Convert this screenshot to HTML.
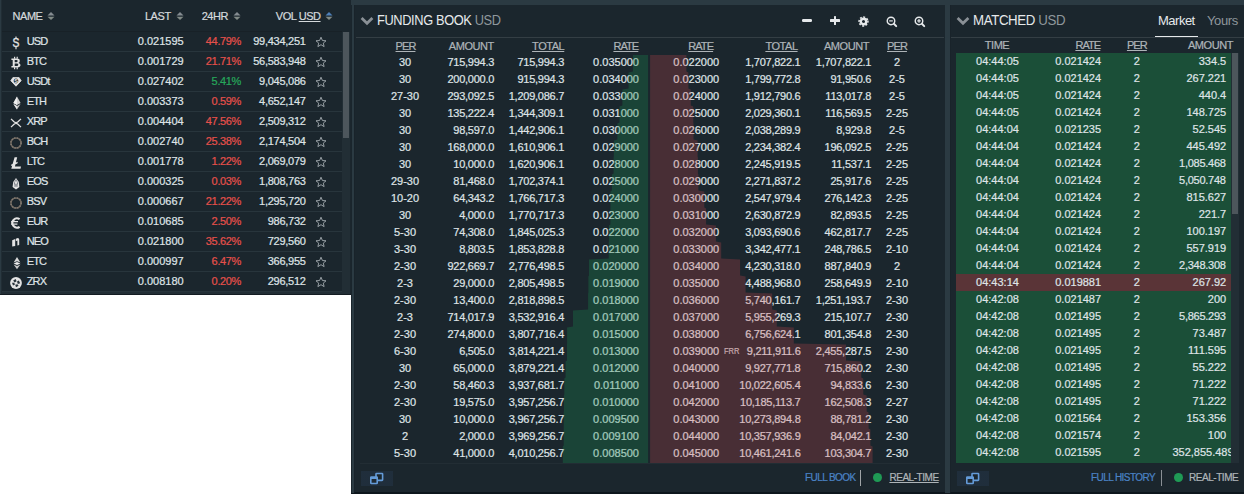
<!DOCTYPE html><html><head><meta charset="utf-8"><title>Funding</title><style>
*{box-sizing:border-box;margin:0;padding:0}
html,body{width:1244px;height:495px;overflow:hidden;background:#fff}
body{font-family:"Liberation Sans",sans-serif;font-size:11px;color:#dfe3e6;position:relative;line-height:1}
.abs{position:absolute}
.t{position:absolute;white-space:nowrap;line-height:12px;height:12px;-webkit-text-stroke:0.22px}
.r{text-align:right}
.c{text-align:center}
.hd{color:#aeb4b8;letter-spacing:-0.45px}
.nm{letter-spacing:-0.9px}
.cm{letter-spacing:-0.25px;margin-right:0.5px}
.pc{letter-spacing:-0.35px;margin-right:0.35px}
.hn{letter-spacing:-0.9px}
.u{text-decoration:underline}
.red{color:#e5504b}
.grn{color:#26a65b}
.title{position:absolute;font-size:14px;line-height:16px;white-space:nowrap;color:#e6e9eb;letter-spacing:-0.4px;transform-origin:0 50%;transform:scaleX(0.915)}
.title span{color:#8f979c}
</style></head><body>
<div class="abs" style="left:0;top:0;width:1244px;height:5px;background:#2b3a42"></div>
<div class="abs" style="left:351px;top:0;width:893px;height:494px;background:#2b3a42"></div>
<div class="abs" style="left:0;top:0;width:351px;height:295px;background:#1b262d"></div>
<div class="abs" style="left:354px;top:5px;width:591px;height:488px;background:#1b262d;border-bottom:1px solid #0d161c;border-left:1px solid #19232a"></div>
<div class="abs" style="left:950px;top:5px;width:294px;height:488px;background:#1b262d;border-bottom:1px solid #0d161c;border-left:1px solid #19232a"></div>
<div class="abs" style="left:351px;top:5px;width:1px;height:489px;background:#1a252c"></div>
<div class="abs" style="left:351px;top:493px;width:893px;height:1px;background:#0d161c"></div>
<div class="abs" style="left:945px;top:493px;width:5px;height:1px;background:#121a1f"></div>
<div class="abs" style="left:0;top:0;width:1px;height:295px;background:#2b3a42"></div><div class="abs" style="left:1px;top:0;width:1px;height:295px;background:#212d34"></div>
<div class="t hd" style="left:12.5px;top:10px;color:#d5d9dc">NAME</div>
<svg class="abs" style="left:46.5px;top:11px" width="8" height="10" viewBox="0 0 8 10"><path d="M0.5 4.5 L4 1.1 L7.5 4.5 Z" fill="#858c91"/><path d="M0.5 5.7 L4 9.1 L7.5 5.7 Z" fill="#818a86"/></svg>
<div class="t r hd" style="right:1073.3500000000001px;top:10px;color:#d5d9dc">LAST</div>
<svg class="abs" style="left:175.5px;top:11px" width="8" height="10" viewBox="0 0 8 10"><path d="M0.5 4.5 L4 1.1 L7.5 4.5 Z" fill="#858c91"/><path d="M0.5 5.7 L4 9.1 L7.5 5.7 Z" fill="#818a86"/></svg>
<div class="t r hd" style="right:1016.0500000000001px;top:10px;color:#d5d9dc">24HR</div>
<svg class="abs" style="left:232.5px;top:11px" width="8" height="10" viewBox="0 0 8 10"><path d="M0.5 4.5 L4 1.1 L7.5 4.5 Z" fill="#858c91"/><path d="M0.5 5.7 L4 9.1 L7.5 5.7 Z" fill="#818a86"/></svg>
<div class="t r hd" style="right:923.45px;top:10px;color:#d5d9dc">VOL <span class="u">USD</span></div>
<svg class="abs" style="left:324.5px;top:11px" width="8" height="10" viewBox="0 0 8 10"><path d="M0.5 4.5 L4 1.1 L7.5 4.5 Z" fill="#4f80ba"/><path d="M0.5 5.7 L4 9.1 L7.5 5.7 Z" fill="#818a86"/></svg>
<div class="abs" style="left:2px;top:31px;width:340px;height:20px;border-top:1px solid #182127"></div>
<div class="t nm" style="left:26.8px;top:35px">USD</div>
<div class="t r" style="right:1060.3px;top:35px">0.021595</div>
<div class="t r pc red" style="right:1002.6px;top:35px">44.79%</div>
<div class="t r cm" style="right:937.8px;top:35px">99,434,251</div>
<svg class="abs" style="left:315px;top:36px" width="12" height="12" viewBox="0 0 12 12"><path d="M6 1.2 L7.4 4.5 L11 4.8 L8.3 7.1 L9.1 10.6 L6 8.7 L2.9 10.6 L3.7 7.1 L1 4.8 L4.6 4.5 Z" fill="none" stroke="#a4abb0" stroke-width="0.9" stroke-linejoin="miter"/></svg>
<svg class="abs" style="left:8.8px;top:35.8px" width="14" height="14" viewBox="0 0 14 14"><text x="0" y="11.1" text-anchor="middle" font-family="Liberation Sans" font-size="12" fill="#e4e4e4" stroke="#e4e4e4" stroke-width="0.4" transform="translate(7 0) scale(0.86 1)">S</text><path d="M7 0.6 V3 M7 10.8 V13.2" stroke="#e4e4e4" stroke-width="1.1"/></svg>
<div class="abs" style="left:2px;top:51px;width:340px;height:20px;border-top:1px solid #28353c"></div>
<div class="t nm" style="left:26.8px;top:55px">BTC</div>
<div class="t r" style="right:1060.3px;top:55px">0.001729</div>
<div class="t r pc red" style="right:1002.6px;top:55px">21.71%</div>
<div class="t r cm" style="right:937.8px;top:55px">56,583,948</div>
<svg class="abs" style="left:315px;top:56px" width="12" height="12" viewBox="0 0 12 12"><path d="M6 1.2 L7.4 4.5 L11 4.8 L8.3 7.1 L9.1 10.6 L6 8.7 L2.9 10.6 L3.7 7.1 L1 4.8 L4.6 4.5 Z" fill="none" stroke="#a4abb0" stroke-width="0.9" stroke-linejoin="miter"/></svg>
<svg class="abs" style="left:9.1px;top:56.0px" width="14" height="14" viewBox="0 0 14 14"><path fill-rule="evenodd" fill="#e4e4e4" d="M2.4 2.6 H7.8 Q10.8 2.6 10.8 4.9 Q10.8 6.5 9.3 6.9 Q11.5 7.3 11.5 9.1 Q11.5 11.4 8.2 11.4 H2.4 V10.1 H3.7 V3.9 H2.4 Z M5.7 4 H7.5 Q8.7 4 8.7 5.1 Q8.7 6.2 7.5 6.2 H5.7 Z M5.7 7.6 H7.8 Q9.3 7.6 9.3 8.8 Q9.3 10 7.8 10 H5.7 Z"/><path d="M5.6 0.8 V2.8 M8.2 0.8 V2.8 M5.6 11.2 V13.3 M8.2 11.2 V13.3" stroke="#e4e4e4" stroke-width="1.2"/></svg>
<div class="abs" style="left:2px;top:71px;width:340px;height:20px;border-top:1px solid #28353c"></div>
<div class="t nm" style="left:26.8px;top:75px">USDt</div>
<div class="t r" style="right:1060.3px;top:75px">0.027402</div>
<div class="t r pc grn" style="right:1002.6px;top:75px">5.41%</div>
<div class="t r cm" style="right:937.8px;top:75px">9,045,086</div>
<svg class="abs" style="left:315px;top:76px" width="12" height="12" viewBox="0 0 12 12"><path d="M6 1.2 L7.4 4.5 L11 4.8 L8.3 7.1 L9.1 10.6 L6 8.7 L2.9 10.6 L3.7 7.1 L1 4.8 L4.6 4.5 Z" fill="none" stroke="#a4abb0" stroke-width="0.9" stroke-linejoin="miter"/></svg>
<svg class="abs" style="left:8.7px;top:75.2px" width="14" height="14" viewBox="0 0 14 14"><path d="M3.9 2.6 H10.1 L12.2 5.7 L7 11.2 L1.8 5.7 Z" fill="#e4e4e4" stroke="#e4e4e4" stroke-width="0.8" stroke-linejoin="round"/><circle cx="7" cy="6" r="2.4" fill="#2a343a"/><text x="7" y="8" text-anchor="middle" font-family="Liberation Sans" font-weight="bold" font-size="5.6" fill="#e4e4e4">S</text></svg>
<div class="abs" style="left:2px;top:91px;width:340px;height:20px;border-top:1px solid #28353c"></div>
<div class="t nm" style="left:26.8px;top:95px">ETH</div>
<div class="t r" style="right:1060.3px;top:95px">0.003373</div>
<div class="t r pc red" style="right:1002.6px;top:95px">0.59%</div>
<div class="t r cm" style="right:937.8px;top:95px">4,652,147</div>
<svg class="abs" style="left:315px;top:96px" width="12" height="12" viewBox="0 0 12 12"><path d="M6 1.2 L7.4 4.5 L11 4.8 L8.3 7.1 L9.1 10.6 L6 8.7 L2.9 10.6 L3.7 7.1 L1 4.8 L4.6 4.5 Z" fill="none" stroke="#a4abb0" stroke-width="0.9" stroke-linejoin="miter"/></svg>
<svg class="abs" style="left:9.5px;top:95.7px" width="14" height="14" viewBox="0 0 14 14"><path d="M7 0.6 L10.6 7 L7 9 L3.4 7 Z" fill="#d2d2d2"/><path d="M7 0.6 L7 9 L3.4 7 Z" fill="#efefef"/><path d="M7 13.4 L10.6 8.1 L7 10.1 L3.4 8.1 Z" fill="#c4c4c4"/><path d="M7 13.4 L7 10.1 L3.4 8.1 Z" fill="#e6e6e6"/></svg>
<div class="abs" style="left:2px;top:111px;width:340px;height:20px;border-top:1px solid #28353c"></div>
<div class="t nm" style="left:26.8px;top:115px">XRP</div>
<div class="t r" style="right:1060.3px;top:115px">0.004404</div>
<div class="t r pc red" style="right:1002.6px;top:115px">47.56%</div>
<div class="t r cm" style="right:937.8px;top:115px">2,509,312</div>
<svg class="abs" style="left:315px;top:116px" width="12" height="12" viewBox="0 0 12 12"><path d="M6 1.2 L7.4 4.5 L11 4.8 L8.3 7.1 L9.1 10.6 L6 8.7 L2.9 10.6 L3.7 7.1 L1 4.8 L4.6 4.5 Z" fill="none" stroke="#a4abb0" stroke-width="0.9" stroke-linejoin="miter"/></svg>
<svg class="abs" style="left:8.7px;top:116.0px" width="14" height="14" viewBox="0 0 14 14"><path d="M2 2.9 L5 5.8 Q7 7.3 9 5.8 L12 2.9 M2 11.1 L5 8.2 Q7 6.7 9 8.2 L12 11.1" fill="none" stroke="#e4e4e4" stroke-width="1.25"/></svg>
<div class="abs" style="left:2px;top:131px;width:340px;height:20px;border-top:1px solid #28353c"></div>
<div class="t nm" style="left:26.8px;top:135px">BCH</div>
<div class="t r" style="right:1060.3px;top:135px">0.002740</div>
<div class="t r pc red" style="right:1002.6px;top:135px">25.38%</div>
<div class="t r cm" style="right:937.8px;top:135px">2,174,504</div>
<svg class="abs" style="left:315px;top:136px" width="12" height="12" viewBox="0 0 12 12"><path d="M6 1.2 L7.4 4.5 L11 4.8 L8.3 7.1 L9.1 10.6 L6 8.7 L2.9 10.6 L3.7 7.1 L1 4.8 L4.6 4.5 Z" fill="none" stroke="#a4abb0" stroke-width="0.9" stroke-linejoin="miter"/></svg>
<svg class="abs" style="left:9px;top:135.7px" width="14" height="14" viewBox="0 0 14 14"><circle cx="7" cy="7" r="5.1" fill="none" stroke="#6d665f" stroke-width="1.5"/><circle cx="7" cy="7" r="5.1" fill="none" stroke="#857c72" stroke-width="1.5" stroke-dasharray="1.2 1.5"/></svg>
<div class="abs" style="left:2px;top:151px;width:340px;height:20px;border-top:1px solid #28353c"></div>
<div class="t nm" style="left:26.8px;top:155px">LTC</div>
<div class="t r" style="right:1060.3px;top:155px">0.001778</div>
<div class="t r pc red" style="right:1002.6px;top:155px">1.22%</div>
<div class="t r cm" style="right:937.8px;top:155px">2,069,079</div>
<svg class="abs" style="left:315px;top:156px" width="12" height="12" viewBox="0 0 12 12"><path d="M6 1.2 L7.4 4.5 L11 4.8 L8.3 7.1 L9.1 10.6 L6 8.7 L2.9 10.6 L3.7 7.1 L1 4.8 L4.6 4.5 Z" fill="none" stroke="#a4abb0" stroke-width="0.9" stroke-linejoin="miter"/></svg>
<svg class="abs" style="left:9.2px;top:156.1px" width="14" height="14" viewBox="0 0 14 14"><path d="M5.6 1.2 H8.2 L6.9 6.6 L8.8 5.8 L8.4 7.4 L6.5 8.2 L5.9 10.6 H12 L11.5 12.7 H2.3 L3.2 9.6 L1.9 10.1 L2.3 8.5 L3.6 8 Z" fill="#e4e4e4"/></svg>
<div class="abs" style="left:2px;top:171px;width:340px;height:20px;border-top:1px solid #28353c"></div>
<div class="t nm" style="left:26.8px;top:175px">EOS</div>
<div class="t r" style="right:1060.3px;top:175px">0.000325</div>
<div class="t r pc red" style="right:1002.6px;top:175px">0.03%</div>
<div class="t r cm" style="right:937.8px;top:175px">1,808,763</div>
<svg class="abs" style="left:315px;top:176px" width="12" height="12" viewBox="0 0 12 12"><path d="M6 1.2 L7.4 4.5 L11 4.8 L8.3 7.1 L9.1 10.6 L6 8.7 L2.9 10.6 L3.7 7.1 L1 4.8 L4.6 4.5 Z" fill="none" stroke="#a4abb0" stroke-width="0.9" stroke-linejoin="miter"/></svg>
<svg class="abs" style="left:9.1px;top:176.7px" width="14" height="14" viewBox="0 0 14 14"><path d="M7 1 L9.8 5 L10.4 10 L7 12.4 L3.6 10 L4.2 5 Z" fill="#e4e4e4"/><path d="M7 2.6 L5.3 5.8 L6 9.8 M7 2.6 L8.7 5.8 L8 9.8 M5.3 5.8 L8 9.8 M8.7 5.8 L6 9.8" stroke="#59626a" stroke-width="0.55" fill="none"/></svg>
<div class="abs" style="left:2px;top:191px;width:340px;height:20px;border-top:1px solid #28353c"></div>
<div class="t nm" style="left:26.8px;top:195px">BSV</div>
<div class="t r" style="right:1060.3px;top:195px">0.000667</div>
<div class="t r pc red" style="right:1002.6px;top:195px">21.22%</div>
<div class="t r cm" style="right:937.8px;top:195px">1,295,720</div>
<svg class="abs" style="left:315px;top:196px" width="12" height="12" viewBox="0 0 12 12"><path d="M6 1.2 L7.4 4.5 L11 4.8 L8.3 7.1 L9.1 10.6 L6 8.7 L2.9 10.6 L3.7 7.1 L1 4.8 L4.6 4.5 Z" fill="none" stroke="#a4abb0" stroke-width="0.9" stroke-linejoin="miter"/></svg>
<svg class="abs" style="left:9px;top:195.7px" width="14" height="14" viewBox="0 0 14 14"><circle cx="7" cy="7" r="5.1" fill="none" stroke="#6d665f" stroke-width="1.5"/><circle cx="7" cy="7" r="5.1" fill="none" stroke="#857c72" stroke-width="1.5" stroke-dasharray="1.2 1.5"/></svg>
<div class="abs" style="left:2px;top:211px;width:340px;height:20px;border-top:1px solid #28353c"></div>
<div class="t nm" style="left:26.8px;top:215px">EUR</div>
<div class="t r" style="right:1060.3px;top:215px">0.010685</div>
<div class="t r pc red" style="right:1002.6px;top:215px">2.50%</div>
<div class="t r cm" style="right:937.8px;top:215px">986,732</div>
<svg class="abs" style="left:315px;top:216px" width="12" height="12" viewBox="0 0 12 12"><path d="M6 1.2 L7.4 4.5 L11 4.8 L8.3 7.1 L9.1 10.6 L6 8.7 L2.9 10.6 L3.7 7.1 L1 4.8 L4.6 4.5 Z" fill="none" stroke="#a4abb0" stroke-width="0.9" stroke-linejoin="miter"/></svg>
<svg class="abs" style="left:9.2px;top:216.4px" width="14" height="14" viewBox="0 0 14 14"><path d="M10.6 3.2 A4.6 4.6 0 1 0 10.6 10.8" fill="none" stroke="#e4e4e4" stroke-width="2.1"/><path d="M2.2 5.7 H9 M2.2 8.2 H8.4" stroke="#e4e4e4" stroke-width="1.3"/></svg>
<div class="abs" style="left:2px;top:231px;width:340px;height:20px;border-top:1px solid #28353c"></div>
<div class="t nm" style="left:26.8px;top:235px">NEO</div>
<div class="t r" style="right:1060.3px;top:235px">0.021800</div>
<div class="t r pc red" style="right:1002.6px;top:235px">35.62%</div>
<div class="t r cm" style="right:937.8px;top:235px">729,560</div>
<svg class="abs" style="left:315px;top:236px" width="12" height="12" viewBox="0 0 12 12"><path d="M6 1.2 L7.4 4.5 L11 4.8 L8.3 7.1 L9.1 10.6 L6 8.7 L2.9 10.6 L3.7 7.1 L1 4.8 L4.6 4.5 Z" fill="none" stroke="#a4abb0" stroke-width="0.9" stroke-linejoin="miter"/></svg>
<svg class="abs" style="left:8.6px;top:235.2px" width="14" height="14" viewBox="0 0 14 14"><path d="M3.2 5.2 L6.2 4 V11 L3.2 11.6 Z" fill="#e4e4e4"/><path d="M6.8 3.7 L8.8 2.9 Q10.2 3 10.2 4.6 V10 L8.4 10.6 V5.6 L6.8 6.2 Z" fill="#e4e4e4"/></svg>
<div class="abs" style="left:2px;top:251px;width:340px;height:20px;border-top:1px solid #28353c"></div>
<div class="t nm" style="left:26.8px;top:255px">ETC</div>
<div class="t r" style="right:1060.3px;top:255px">0.000997</div>
<div class="t r pc red" style="right:1002.6px;top:255px">6.47%</div>
<div class="t r cm" style="right:937.8px;top:255px">366,955</div>
<svg class="abs" style="left:315px;top:256px" width="12" height="12" viewBox="0 0 12 12"><path d="M6 1.2 L7.4 4.5 L11 4.8 L8.3 7.1 L9.1 10.6 L6 8.7 L2.9 10.6 L3.7 7.1 L1 4.8 L4.6 4.5 Z" fill="none" stroke="#a4abb0" stroke-width="0.9" stroke-linejoin="miter"/></svg>
<svg class="abs" style="left:9.7px;top:256.4px" width="14" height="14" viewBox="0 0 14 14"><path d="M7 1 L10.4 6.6 L7 5.3 L3.6 6.6 Z" fill="#d8d8d8"/><path d="M3.6 7.4 L7 6.1 L10.4 7.4 L7 9 Z" fill="#ededed"/><path d="M7 13.2 L10.4 8.4 L7 10 L3.6 8.4 Z" fill="#c9c9c9"/></svg>
<div class="abs" style="left:2px;top:271px;width:340px;height:20px;border-top:1px solid #28353c"></div>
<div class="t nm" style="left:26.8px;top:275px">ZRX</div>
<div class="t r" style="right:1060.3px;top:275px">0.008180</div>
<div class="t r pc red" style="right:1002.6px;top:275px">0.20%</div>
<div class="t r cm" style="right:937.8px;top:275px">296,512</div>
<svg class="abs" style="left:315px;top:276px" width="12" height="12" viewBox="0 0 12 12"><path d="M6 1.2 L7.4 4.5 L11 4.8 L8.3 7.1 L9.1 10.6 L6 8.7 L2.9 10.6 L3.7 7.1 L1 4.8 L4.6 4.5 Z" fill="none" stroke="#a4abb0" stroke-width="0.9" stroke-linejoin="miter"/></svg>
<svg class="abs" style="left:9px;top:275.5px" width="14" height="14" viewBox="0 0 14 14"><circle cx="7" cy="7" r="5.9" fill="#e4e4e4"/><path d="M4.2 4.6 L6.6 3 L7.6 5.2 L5.6 6.6 Z M9.8 4.4 L11.2 7.2 L8.8 8 L8 5.6 Z M9.6 9.8 L7 11.2 L6.2 8.8 L8.4 8.2 Z M4 9.4 L3 6.8 L5.2 6.8 L6 8.6 Z" fill="#27323a"/></svg>
<div class="abs" style="left:2px;top:291px;width:340px;height:1px;background:#28353c"></div>
<div class="abs" style="left:342px;top:32px;width:8px;height:262px;background:#222e35"></div>
<div class="abs" style="left:2px;top:292px;width:348px;height:2px;background:#222e35"></div>
<div class="abs" style="left:0;top:294px;width:351px;height:1px;background:#141c22"></div>
<div class="abs" style="left:343px;top:32px;width:6px;height:106px;background:#4d565c"></div>
<svg class="abs" style="left:360.2px;top:15.7px" width="14" height="10" viewBox="0 0 14 10"><path d="M1.6 2 L7 7.2 L12.4 2" fill="none" stroke="#8a9096" stroke-width="2.8"/></svg>
<div class="title" style="left:377.2px;top:12px">FUNDING BOOK <span>USD</span></div>
<div class="abs" style="left:356px;top:37px;width:588px;height:1px;background:#343e44"></div>
<div class="t c hd hn u" style="left:385.5px;width:40px;top:40px">PER</div>
<div class="t r hd" style="right:750.25px;top:40px">AMOUNT</div>
<div class="t r hd u" style="right:679.75px;top:40px">TOTAL</div>
<div class="t r hd hn u" style="right:605.6999999999999px;top:40px">RATE</div>
<div class="t r hd hn u" style="right:530.9px;top:40px">RATE</div>
<div class="t r hd u" style="right:446.45px;top:40px">TOTAL</div>
<div class="t r hd" style="right:375.05px;top:40px">AMOUNT</div>
<div class="t c hd hn u" style="left:877px;width:40px;top:40px">PER</div>
<div class="t c" style="left:375px;width:60px;top:56px">30</div>
<div class="t r cm" style="right:749.4px;top:56px">715,994.3</div>
<div class="t r cm" style="right:679.4px;top:56px">715,994.3</div>
<div class="t r" style="right:605px;top:56px">0.035000</div>
<div class="t c" style="left:375px;width:60px;top:73px">30</div>
<div class="t r cm" style="right:749.4px;top:73px">200,000.0</div>
<div class="t r cm" style="right:679.4px;top:73px">915,994.3</div>
<div class="t r" style="right:605px;top:73px">0.034000</div>
<div class="t c" style="left:375px;width:60px;top:90px">27-30</div>
<div class="t r cm" style="right:749.4px;top:90px">293,092.5</div>
<div class="t r cm" style="right:679.4px;top:90px">1,209,086.7</div>
<div class="t r" style="right:605px;top:90px">0.033000</div>
<div class="t c" style="left:375px;width:60px;top:107px">30</div>
<div class="t r cm" style="right:749.4px;top:107px">135,222.4</div>
<div class="t r cm" style="right:679.4px;top:107px">1,344,309.1</div>
<div class="t r" style="right:605px;top:107px">0.031000</div>
<div class="t c" style="left:375px;width:60px;top:124px">30</div>
<div class="t r cm" style="right:749.4px;top:124px">98,597.0</div>
<div class="t r cm" style="right:679.4px;top:124px">1,442,906.1</div>
<div class="t r" style="right:605px;top:124px">0.030000</div>
<div class="t c" style="left:375px;width:60px;top:141px">30</div>
<div class="t r cm" style="right:749.4px;top:141px">168,000.0</div>
<div class="t r cm" style="right:679.4px;top:141px">1,610,906.1</div>
<div class="t r" style="right:605px;top:141px">0.029000</div>
<div class="t c" style="left:375px;width:60px;top:158px">30</div>
<div class="t r cm" style="right:749.4px;top:158px">10,000.0</div>
<div class="t r cm" style="right:679.4px;top:158px">1,620,906.1</div>
<div class="t r" style="right:605px;top:158px">0.028000</div>
<div class="t c" style="left:375px;width:60px;top:175px">29-30</div>
<div class="t r cm" style="right:749.4px;top:175px">81,468.0</div>
<div class="t r cm" style="right:679.4px;top:175px">1,702,374.1</div>
<div class="t r" style="right:605px;top:175px">0.025000</div>
<div class="t c" style="left:375px;width:60px;top:192px">10-20</div>
<div class="t r cm" style="right:749.4px;top:192px">64,343.2</div>
<div class="t r cm" style="right:679.4px;top:192px">1,766,717.3</div>
<div class="t r" style="right:605px;top:192px">0.024000</div>
<div class="t c" style="left:375px;width:60px;top:209px">30</div>
<div class="t r cm" style="right:749.4px;top:209px">4,000.0</div>
<div class="t r cm" style="right:679.4px;top:209px">1,770,717.3</div>
<div class="t r" style="right:605px;top:209px">0.023000</div>
<div class="t c" style="left:375px;width:60px;top:226px">5-30</div>
<div class="t r cm" style="right:749.4px;top:226px">74,308.0</div>
<div class="t r cm" style="right:679.4px;top:226px">1,845,025.3</div>
<div class="t r" style="right:605px;top:226px">0.022000</div>
<div class="t c" style="left:375px;width:60px;top:243px">3-30</div>
<div class="t r cm" style="right:749.4px;top:243px">8,803.5</div>
<div class="t r cm" style="right:679.4px;top:243px">1,853,828.8</div>
<div class="t r" style="right:605px;top:243px">0.021000</div>
<div class="t c" style="left:375px;width:60px;top:260px">2-30</div>
<div class="t r cm" style="right:749.4px;top:260px">922,669.7</div>
<div class="t r cm" style="right:679.4px;top:260px">2,776,498.5</div>
<div class="t r" style="right:605px;top:260px">0.020000</div>
<div class="t c" style="left:375px;width:60px;top:277px">2-3</div>
<div class="t r cm" style="right:749.4px;top:277px">29,000.0</div>
<div class="t r cm" style="right:679.4px;top:277px">2,805,498.5</div>
<div class="t r" style="right:605px;top:277px">0.019000</div>
<div class="t c" style="left:375px;width:60px;top:294px">2-30</div>
<div class="t r cm" style="right:749.4px;top:294px">13,400.0</div>
<div class="t r cm" style="right:679.4px;top:294px">2,818,898.5</div>
<div class="t r" style="right:605px;top:294px">0.018000</div>
<div class="t c" style="left:375px;width:60px;top:311px">2-3</div>
<div class="t r cm" style="right:749.4px;top:311px">714,017.9</div>
<div class="t r cm" style="right:679.4px;top:311px">3,532,916.4</div>
<div class="t r" style="right:605px;top:311px">0.017000</div>
<div class="t c" style="left:375px;width:60px;top:328px">2-30</div>
<div class="t r cm" style="right:749.4px;top:328px">274,800.0</div>
<div class="t r cm" style="right:679.4px;top:328px">3,807,716.4</div>
<div class="t r" style="right:605px;top:328px">0.015000</div>
<div class="t c" style="left:375px;width:60px;top:345px">6-30</div>
<div class="t r cm" style="right:749.4px;top:345px">6,505.0</div>
<div class="t r cm" style="right:679.4px;top:345px">3,814,221.4</div>
<div class="t r" style="right:605px;top:345px">0.013000</div>
<div class="t c" style="left:375px;width:60px;top:362px">30</div>
<div class="t r cm" style="right:749.4px;top:362px">65,000.0</div>
<div class="t r cm" style="right:679.4px;top:362px">3,879,221.4</div>
<div class="t r" style="right:605px;top:362px">0.012000</div>
<div class="t c" style="left:375px;width:60px;top:379px">2-30</div>
<div class="t r cm" style="right:749.4px;top:379px">58,460.3</div>
<div class="t r cm" style="right:679.4px;top:379px">3,937,681.7</div>
<div class="t r" style="right:605px;top:379px">0.011000</div>
<div class="t c" style="left:375px;width:60px;top:396px">2-30</div>
<div class="t r cm" style="right:749.4px;top:396px">19,575.0</div>
<div class="t r cm" style="right:679.4px;top:396px">3,957,256.7</div>
<div class="t r" style="right:605px;top:396px">0.010000</div>
<div class="t c" style="left:375px;width:60px;top:413px">30</div>
<div class="t r cm" style="right:749.4px;top:413px">10,000.0</div>
<div class="t r cm" style="right:679.4px;top:413px">3,967,256.7</div>
<div class="t r" style="right:605px;top:413px">0.009500</div>
<div class="t c" style="left:375px;width:60px;top:430px">2</div>
<div class="t r cm" style="right:749.4px;top:430px">2,000.0</div>
<div class="t r cm" style="right:679.4px;top:430px">3,969,256.7</div>
<div class="t r" style="right:605px;top:430px">0.009100</div>
<div class="t c" style="left:375px;width:60px;top:447px">5-30</div>
<div class="t r cm" style="right:749.4px;top:447px">41,000.0</div>
<div class="t r cm" style="right:679.4px;top:447px">4,010,256.7</div>
<div class="t r" style="right:605px;top:447px">0.008500</div>
<div class="t r" style="right:524.8px;top:56px">0.022000</div>
<div class="t r cm" style="right:443px;top:56px">1,707,822.1</div>
<div class="t r cm" style="right:372.29999999999995px;top:56px">1,707,822.1</div>
<div class="t c" style="left:867px;width:60px;top:56px">2</div>
<div class="t r" style="right:524.8px;top:73px">0.023000</div>
<div class="t r cm" style="right:443px;top:73px">1,799,772.8</div>
<div class="t r cm" style="right:372.29999999999995px;top:73px">91,950.6</div>
<div class="t c" style="left:867px;width:60px;top:73px">2-5</div>
<div class="t r" style="right:524.8px;top:90px">0.024000</div>
<div class="t r cm" style="right:443px;top:90px">1,912,790.6</div>
<div class="t r cm" style="right:372.29999999999995px;top:90px">113,017.8</div>
<div class="t c" style="left:867px;width:60px;top:90px">2-5</div>
<div class="t r" style="right:524.8px;top:107px">0.025000</div>
<div class="t r cm" style="right:443px;top:107px">2,029,360.1</div>
<div class="t r cm" style="right:372.29999999999995px;top:107px">116,569.5</div>
<div class="t c" style="left:867px;width:60px;top:107px">2-25</div>
<div class="t r" style="right:524.8px;top:124px">0.026000</div>
<div class="t r cm" style="right:443px;top:124px">2,038,289.9</div>
<div class="t r cm" style="right:372.29999999999995px;top:124px">8,929.8</div>
<div class="t c" style="left:867px;width:60px;top:124px">2-5</div>
<div class="t r" style="right:524.8px;top:141px">0.027000</div>
<div class="t r cm" style="right:443px;top:141px">2,234,382.4</div>
<div class="t r cm" style="right:372.29999999999995px;top:141px">196,092.5</div>
<div class="t c" style="left:867px;width:60px;top:141px">2-25</div>
<div class="t r" style="right:524.8px;top:158px">0.028000</div>
<div class="t r cm" style="right:443px;top:158px">2,245,919.5</div>
<div class="t r cm" style="right:372.29999999999995px;top:158px">11,537.1</div>
<div class="t c" style="left:867px;width:60px;top:158px">2-25</div>
<div class="t r" style="right:524.8px;top:175px">0.029000</div>
<div class="t r cm" style="right:443px;top:175px">2,271,837.2</div>
<div class="t r cm" style="right:372.29999999999995px;top:175px">25,917.6</div>
<div class="t c" style="left:867px;width:60px;top:175px">2-25</div>
<div class="t r" style="right:524.8px;top:192px">0.030000</div>
<div class="t r cm" style="right:443px;top:192px">2,547,979.4</div>
<div class="t r cm" style="right:372.29999999999995px;top:192px">276,142.3</div>
<div class="t c" style="left:867px;width:60px;top:192px">2-25</div>
<div class="t r" style="right:524.8px;top:209px">0.031000</div>
<div class="t r cm" style="right:443px;top:209px">2,630,872.9</div>
<div class="t r cm" style="right:372.29999999999995px;top:209px">82,893.5</div>
<div class="t c" style="left:867px;width:60px;top:209px">2-25</div>
<div class="t r" style="right:524.8px;top:226px">0.032000</div>
<div class="t r cm" style="right:443px;top:226px">3,093,690.6</div>
<div class="t r cm" style="right:372.29999999999995px;top:226px">462,817.7</div>
<div class="t c" style="left:867px;width:60px;top:226px">2-25</div>
<div class="t r" style="right:524.8px;top:243px">0.033000</div>
<div class="t r cm" style="right:443px;top:243px">3,342,477.1</div>
<div class="t r cm" style="right:372.29999999999995px;top:243px">248,786.5</div>
<div class="t c" style="left:867px;width:60px;top:243px">2-10</div>
<div class="t r" style="right:524.8px;top:260px">0.034000</div>
<div class="t r cm" style="right:443px;top:260px">4,230,318.0</div>
<div class="t r cm" style="right:372.29999999999995px;top:260px">887,840.9</div>
<div class="t c" style="left:867px;width:60px;top:260px">2</div>
<div class="t r" style="right:524.8px;top:277px">0.035000</div>
<div class="t r cm" style="right:443px;top:277px">4,488,968.0</div>
<div class="t r cm" style="right:372.29999999999995px;top:277px">258,649.9</div>
<div class="t c" style="left:867px;width:60px;top:277px">2-10</div>
<div class="t r" style="right:524.8px;top:294px">0.036000</div>
<div class="t r cm" style="right:443px;top:294px">5,740,161.7</div>
<div class="t r cm" style="right:372.29999999999995px;top:294px">1,251,193.7</div>
<div class="t c" style="left:867px;width:60px;top:294px">2-30</div>
<div class="t r" style="right:524.8px;top:311px">0.037000</div>
<div class="t r cm" style="right:443px;top:311px">5,955,269.3</div>
<div class="t r cm" style="right:372.29999999999995px;top:311px">215,107.7</div>
<div class="t c" style="left:867px;width:60px;top:311px">2-30</div>
<div class="t r" style="right:524.8px;top:328px">0.038000</div>
<div class="t r cm" style="right:443px;top:328px">6,756,624.1</div>
<div class="t r cm" style="right:372.29999999999995px;top:328px">801,354.8</div>
<div class="t c" style="left:867px;width:60px;top:328px">2-30</div>
<div class="t r" style="right:524.8px;top:345px">0.039000</div>
<div class="t r cm" style="right:443px;top:345px">9,211,911.6</div>
<div class="t r cm" style="right:372.29999999999995px;top:345px">2,455,287.5</div>
<div class="t c" style="left:867px;width:60px;top:345px">2-30</div>
<div class="t" style="left:724px;top:345px;font-size:9.5px;color:#c5c9cc;transform-origin:0 50%;transform:scaleX(0.79)">FRR</div>
<div class="t r" style="right:524.8px;top:362px">0.040000</div>
<div class="t r cm" style="right:443px;top:362px">9,927,771.8</div>
<div class="t r cm" style="right:372.29999999999995px;top:362px">715,860.2</div>
<div class="t c" style="left:867px;width:60px;top:362px">2-30</div>
<div class="t r" style="right:524.8px;top:379px">0.041000</div>
<div class="t r cm" style="right:443px;top:379px">10,022,605.4</div>
<div class="t r cm" style="right:372.29999999999995px;top:379px">94,833.6</div>
<div class="t c" style="left:867px;width:60px;top:379px">2-30</div>
<div class="t r" style="right:524.8px;top:396px">0.042000</div>
<div class="t r cm" style="right:443px;top:396px">10,185,113.7</div>
<div class="t r cm" style="right:372.29999999999995px;top:396px">162,508.3</div>
<div class="t c" style="left:867px;width:60px;top:396px">2-27</div>
<div class="t r" style="right:524.8px;top:413px">0.043000</div>
<div class="t r cm" style="right:443px;top:413px">10,273,894.8</div>
<div class="t r cm" style="right:372.29999999999995px;top:413px">88,781.2</div>
<div class="t c" style="left:867px;width:60px;top:413px">2-30</div>
<div class="t r" style="right:524.8px;top:430px">0.044000</div>
<div class="t r cm" style="right:443px;top:430px">10,357,936.9</div>
<div class="t r cm" style="right:372.29999999999995px;top:430px">84,042.1</div>
<div class="t c" style="left:867px;width:60px;top:430px">2-30</div>
<div class="t r" style="right:524.8px;top:447px">0.045000</div>
<div class="t r cm" style="right:443px;top:447px">10,461,241.6</div>
<div class="t r cm" style="right:372.29999999999995px;top:447px">103,304.7</div>
<div class="t c" style="left:867px;width:60px;top:447px">2-30</div>
<svg class="abs" style="left:355px;top:0" width="590" height="470" viewBox="355 0 590 470"><path d="M648.1 55.0 L632.9 55.0 L632.9 71.5 L628.6 72.5 L628.6 88.5 L622.4 89.5 L622.4 105.5 L619.5 106.5 L619.5 122.5 L617.4 123.5 L617.4 139.5 L613.8 140.5 L613.8 156.5 L613.6 157.5 L613.6 173.5 L611.9 174.5 L611.9 190.5 L610.5 191.5 L610.5 207.5 L610.4 208.5 L610.4 224.5 L608.9 225.5 L608.9 241.5 L608.7 242.5 L608.7 258.5 L589.0 259.5 L589.0 275.5 L588.4 276.5 L588.4 292.5 L588.1 293.5 L588.1 309.5 L573.0 310.5 L573.0 326.5 L567.1 327.5 L567.1 343.5 L567.0 344.5 L567.0 360.5 L565.6 361.5 L565.6 377.5 L564.3 378.5 L564.3 394.5 L563.9 395.5 L563.9 411.5 L563.7 412.5 L563.7 428.5 L563.7 429.5 L563.7 445.5 L562.8 446.5 L562.8 463.0 L648.1 463.0 Z" fill="rgba(27,140,80,0.3)"/><path d="M650.1 55.0 L686.4 55.0 L686.4 71.5 L688.4 72.5 L688.4 88.5 L690.8 89.5 L690.8 105.5 L693.3 106.5 L693.3 122.5 L693.5 123.5 L693.5 139.5 L697.6 140.5 L697.6 156.5 L697.9 157.5 L697.9 173.5 L698.4 174.5 L698.4 190.5 L704.3 191.5 L704.3 207.5 L706.1 208.5 L706.1 224.5 L715.9 225.5 L715.9 241.5 L721.2 242.5 L721.2 258.5 L740.1 259.5 L740.1 275.5 L745.6 276.5 L745.6 292.5 L772.2 293.5 L772.2 309.5 L776.8 310.5 L776.8 326.5 L793.8 327.5 L793.8 343.5 L846.0 344.5 L846.0 360.5 L861.3 361.5 L861.3 377.5 L863.3 378.5 L863.3 394.5 L866.7 395.5 L866.7 411.5 L868.6 412.5 L868.6 428.5 L870.4 429.5 L870.4 445.5 L872.6 446.5 L872.6 463.0 L650.1 463.0 Z" fill="rgba(207,70,81,0.25)"/></svg>
<div class="abs" style="left:802px;top:19.1px;width:10px;height:3.2px;background:#e6e9eb;border-radius:1.2px"></div>
<div class="abs" style="left:830.2px;top:19px;width:9.8px;height:2.9px;background:#e6e9eb;border-radius:0.6px"></div><div class="abs" style="left:833.6px;top:15.9px;width:2.9px;height:9.2px;background:#e6e9eb;border-radius:0.6px"></div>
<svg class="abs" style="left:857.5px;top:15.5px" width="11" height="11" viewBox="0 0 11 11"><circle cx="5.5" cy="5.5" r="4.45" fill="none" stroke="#e6e9eb" stroke-width="1.5" stroke-dasharray="1.9 1.595" transform="rotate(-10 5.5 5.5)"/><circle cx="5.5" cy="5.5" r="2.75" fill="none" stroke="#e6e9eb" stroke-width="2.4"/></svg>
<svg class="abs" style="left:885.6px;top:16.2px" width="12" height="12" viewBox="0 0 12 12"><circle cx="5" cy="4.9" r="3.75" fill="none" stroke="#e6e9eb" stroke-width="1.45"/><path d="M7.9 7.8 L10.2 10.1" stroke="#e6e9eb" stroke-width="2" stroke-linecap="round"/><path d="M3.2 4.9 H6.8" stroke="#e6e9eb" stroke-width="1.2"/></svg>
<svg class="abs" style="left:913.7px;top:16.2px" width="12" height="12" viewBox="0 0 12 12"><circle cx="5" cy="4.9" r="3.75" fill="none" stroke="#e6e9eb" stroke-width="1.45"/><path d="M7.9 7.8 L10.2 10.1" stroke="#e6e9eb" stroke-width="2" stroke-linecap="round"/><path d="M3.2 4.9 H6.8" stroke="#e6e9eb" stroke-width="1.2"/><path d="M5 3.1 V6.7" stroke="#e6e9eb" stroke-width="1.2"/></svg>
<div class="abs" style="left:360px;top:463px;width:580px;height:1px;background:#222d34"></div>
<div class="abs" style="left:361px;top:471px;width:32px;height:15px;background-color:#212e37;background-image:radial-gradient(circle,#1b2a58 0.45px,rgba(27,42,88,0) 0.75px);background-size:2px 2px"></div><svg class="abs" style="left:369px;top:471.5px" width="16" height="14" viewBox="0 0 16 14"><rect x="7" y="1.5" width="6.6" height="6.9" rx="0.6" fill="#1b262d" stroke="#649bd8" stroke-width="1.6"/><rect x="1.8" y="5.2" width="6.4" height="6.3" rx="0.6" fill="#1f2a33" stroke="#649bd8" stroke-width="1.6"/><rect x="1.2" y="4.5" width="7.6" height="2.6" rx="0.6" fill="#649bd8"/></svg>
<div class="t" style="left:805px;top:472px;font-size:10px;color:#4a82c4;letter-spacing:-0.58px">FULL BOOK</div>
<div class="abs" style="left:860px;top:470px;width:1px;height:16px;background:#a0a5a8"></div>
<div class="abs" style="left:873px;top:473px;width:9px;height:9px;border-radius:5px;background:#1f9a55"></div>
<div class="t hd u" style="left:889.4px;top:472px;font-size:10px;letter-spacing:-0.45px">REAL-TIME</div>
<svg class="abs" style="left:955.6px;top:15.7px" width="14" height="10" viewBox="0 0 14 10"><path d="M1.6 2 L7 7.2 L12.4 2" fill="none" stroke="#8a9096" stroke-width="2.8"/></svg>
<div class="title" style="left:972.8px;top:12px;transform:scaleX(0.948)">MATCHED <span>USD</span></div>
<div class="abs" style="left:951px;top:37px;width:293px;height:1px;background:#343e44"></div>
<div class="t" style="left:1158px;top:13px;font-size:13px;line-height:15px;height:15px;color:#e6e9eb;letter-spacing:-0.5px;-webkit-text-stroke:0">Market</div>
<div class="t" style="left:1207px;top:13px;font-size:13px;line-height:15px;height:15px;color:#8f979c;letter-spacing:-0.4px;-webkit-text-stroke:0">Yours</div>
<div class="abs" style="left:1155px;top:36px;width:43px;height:1px;background:#e6e9eb"></div>
<div class="t c hd" style="left:967px;width:60px;top:39px">TIME</div>
<div class="t r hd hn u" style="right:143.69999999999996px;top:39px">RATE</div>
<div class="t c hd hn u" style="left:1106.9px;width:60px;top:39px">PER</div>
<div class="t r hd" style="right:11.049999999999908px;top:39px">AMOUNT</div>
<div class="abs" style="left:956px;top:53px;width:275px;height:410px;background:#1b4f38"></div>
<div class="t c" style="left:967.5px;width:60px;top:55px">04:44:05</div>
<div class="t r" style="right:142.9000000000001px;top:55px">0.021424</div>
<div class="t c" style="left:1106.7px;width:60px;top:55px">2</div>
<div class="t r" style="right:17.799999999999955px;top:55px">334.5</div>
<div class="t c" style="left:967.5px;width:60px;top:72px">04:44:05</div>
<div class="t r" style="right:142.9000000000001px;top:72px">0.021424</div>
<div class="t c" style="left:1106.7px;width:60px;top:72px">2</div>
<div class="t r" style="right:17.799999999999955px;top:72px">267.221</div>
<div class="t c" style="left:967.5px;width:60px;top:89px">04:44:05</div>
<div class="t r" style="right:142.9000000000001px;top:89px">0.021424</div>
<div class="t c" style="left:1106.7px;width:60px;top:89px">2</div>
<div class="t r" style="right:17.799999999999955px;top:89px">440.4</div>
<div class="t c" style="left:967.5px;width:60px;top:106px">04:44:05</div>
<div class="t r" style="right:142.9000000000001px;top:106px">0.021424</div>
<div class="t c" style="left:1106.7px;width:60px;top:106px">2</div>
<div class="t r" style="right:17.799999999999955px;top:106px">148.725</div>
<div class="t c" style="left:967.5px;width:60px;top:123px">04:44:04</div>
<div class="t r" style="right:142.9000000000001px;top:123px">0.021235</div>
<div class="t c" style="left:1106.7px;width:60px;top:123px">2</div>
<div class="t r" style="right:17.799999999999955px;top:123px">52.545</div>
<div class="t c" style="left:967.5px;width:60px;top:140px">04:44:04</div>
<div class="t r" style="right:142.9000000000001px;top:140px">0.021424</div>
<div class="t c" style="left:1106.7px;width:60px;top:140px">2</div>
<div class="t r" style="right:17.799999999999955px;top:140px">445.492</div>
<div class="t c" style="left:967.5px;width:60px;top:157px">04:44:04</div>
<div class="t r" style="right:142.9000000000001px;top:157px">0.021424</div>
<div class="t c" style="left:1106.7px;width:60px;top:157px">2</div>
<div class="t r cm" style="right:17.799999999999955px;top:157px">1,085.468</div>
<div class="t c" style="left:967.5px;width:60px;top:174px">04:44:04</div>
<div class="t r" style="right:142.9000000000001px;top:174px">0.021424</div>
<div class="t c" style="left:1106.7px;width:60px;top:174px">2</div>
<div class="t r cm" style="right:17.799999999999955px;top:174px">5,050.748</div>
<div class="t c" style="left:967.5px;width:60px;top:191px">04:44:04</div>
<div class="t r" style="right:142.9000000000001px;top:191px">0.021424</div>
<div class="t c" style="left:1106.7px;width:60px;top:191px">2</div>
<div class="t r" style="right:17.799999999999955px;top:191px">815.627</div>
<div class="t c" style="left:967.5px;width:60px;top:208px">04:44:04</div>
<div class="t r" style="right:142.9000000000001px;top:208px">0.021424</div>
<div class="t c" style="left:1106.7px;width:60px;top:208px">2</div>
<div class="t r" style="right:17.799999999999955px;top:208px">221.7</div>
<div class="t c" style="left:967.5px;width:60px;top:225px">04:44:04</div>
<div class="t r" style="right:142.9000000000001px;top:225px">0.021424</div>
<div class="t c" style="left:1106.7px;width:60px;top:225px">2</div>
<div class="t r" style="right:17.799999999999955px;top:225px">100.197</div>
<div class="t c" style="left:967.5px;width:60px;top:242px">04:44:04</div>
<div class="t r" style="right:142.9000000000001px;top:242px">0.021424</div>
<div class="t c" style="left:1106.7px;width:60px;top:242px">2</div>
<div class="t r" style="right:17.799999999999955px;top:242px">557.919</div>
<div class="t c" style="left:967.5px;width:60px;top:259px">04:44:04</div>
<div class="t r" style="right:142.9000000000001px;top:259px">0.021424</div>
<div class="t c" style="left:1106.7px;width:60px;top:259px">2</div>
<div class="t r cm" style="right:17.799999999999955px;top:259px">2,348.308</div>
<div class="abs" style="left:956px;top:274px;width:275px;height:17px;background:#5a3437"></div>
<div class="t c" style="left:967.5px;width:60px;top:276px">04:43:14</div>
<div class="t r" style="right:142.9000000000001px;top:276px">0.019881</div>
<div class="t c" style="left:1106.7px;width:60px;top:276px">2</div>
<div class="t r" style="right:17.799999999999955px;top:276px">267.92</div>
<div class="t c" style="left:967.5px;width:60px;top:293px">04:42:08</div>
<div class="t r" style="right:142.9000000000001px;top:293px">0.021487</div>
<div class="t c" style="left:1106.7px;width:60px;top:293px">2</div>
<div class="t r" style="right:17.799999999999955px;top:293px">200</div>
<div class="t c" style="left:967.5px;width:60px;top:310px">04:42:08</div>
<div class="t r" style="right:142.9000000000001px;top:310px">0.021495</div>
<div class="t c" style="left:1106.7px;width:60px;top:310px">2</div>
<div class="t r cm" style="right:17.799999999999955px;top:310px">5,865.293</div>
<div class="t c" style="left:967.5px;width:60px;top:327px">04:42:08</div>
<div class="t r" style="right:142.9000000000001px;top:327px">0.021495</div>
<div class="t c" style="left:1106.7px;width:60px;top:327px">2</div>
<div class="t r" style="right:17.799999999999955px;top:327px">73.487</div>
<div class="t c" style="left:967.5px;width:60px;top:344px">04:42:08</div>
<div class="t r" style="right:142.9000000000001px;top:344px">0.021495</div>
<div class="t c" style="left:1106.7px;width:60px;top:344px">2</div>
<div class="t r" style="right:17.799999999999955px;top:344px">111.595</div>
<div class="t c" style="left:967.5px;width:60px;top:361px">04:42:08</div>
<div class="t r" style="right:142.9000000000001px;top:361px">0.021495</div>
<div class="t c" style="left:1106.7px;width:60px;top:361px">2</div>
<div class="t r" style="right:17.799999999999955px;top:361px">55.222</div>
<div class="t c" style="left:967.5px;width:60px;top:378px">04:42:08</div>
<div class="t r" style="right:142.9000000000001px;top:378px">0.021495</div>
<div class="t c" style="left:1106.7px;width:60px;top:378px">2</div>
<div class="t r" style="right:17.799999999999955px;top:378px">71.222</div>
<div class="t c" style="left:967.5px;width:60px;top:395px">04:42:08</div>
<div class="t r" style="right:142.9000000000001px;top:395px">0.021495</div>
<div class="t c" style="left:1106.7px;width:60px;top:395px">2</div>
<div class="t r" style="right:17.799999999999955px;top:395px">71.222</div>
<div class="t c" style="left:967.5px;width:60px;top:412px">04:42:08</div>
<div class="t r" style="right:142.9000000000001px;top:412px">0.021564</div>
<div class="t c" style="left:1106.7px;width:60px;top:412px">2</div>
<div class="t r" style="right:17.799999999999955px;top:412px">153.356</div>
<div class="t c" style="left:967.5px;width:60px;top:429px">04:42:08</div>
<div class="t r" style="right:142.9000000000001px;top:429px">0.021574</div>
<div class="t c" style="left:1106.7px;width:60px;top:429px">2</div>
<div class="t r" style="right:17.799999999999955px;top:429px">100</div>
<div class="t c" style="left:967.5px;width:60px;top:446px">04:42:08</div>
<div class="t r" style="right:142.9000000000001px;top:446px">0.021595</div>
<div class="t c" style="left:1106.7px;width:60px;top:446px">2</div>
<div class="t" style="left:1172.4px;top:446px;width:59px;overflow:hidden">352,855.489</div>
<div class="abs" style="left:1231px;top:53px;width:7.5px;height:410px;background:#222e35"></div>
<div class="abs" style="left:1232px;top:53px;width:6px;height:161px;background:#4d565c"></div>
<div class="abs" style="left:957px;top:471px;width:32px;height:15px;background-color:#212e37;background-image:radial-gradient(circle,#1b2a58 0.45px,rgba(27,42,88,0) 0.75px);background-size:2px 2px"></div><svg class="abs" style="left:965px;top:471.5px" width="16" height="14" viewBox="0 0 16 14"><rect x="7" y="1.5" width="6.6" height="6.9" rx="0.6" fill="#1b262d" stroke="#649bd8" stroke-width="1.6"/><rect x="1.8" y="5.2" width="6.4" height="6.3" rx="0.6" fill="#1f2a33" stroke="#649bd8" stroke-width="1.6"/><rect x="1.2" y="4.5" width="7.6" height="2.6" rx="0.6" fill="#649bd8"/></svg>
<div class="t" style="left:1091px;top:472px;font-size:10px;color:#4a82c4;letter-spacing:-0.58px">FULL HISTORY</div>
<div class="abs" style="left:1161px;top:470px;width:1px;height:16px;background:#8a9096"></div>
<div class="abs" style="left:1174px;top:473px;width:9px;height:9px;border-radius:5px;background:#1f9a55"></div>
<div class="t hd" style="left:1189px;top:472px;font-size:10px;letter-spacing:-0.45px">REAL-TIME</div>
</body></html>
